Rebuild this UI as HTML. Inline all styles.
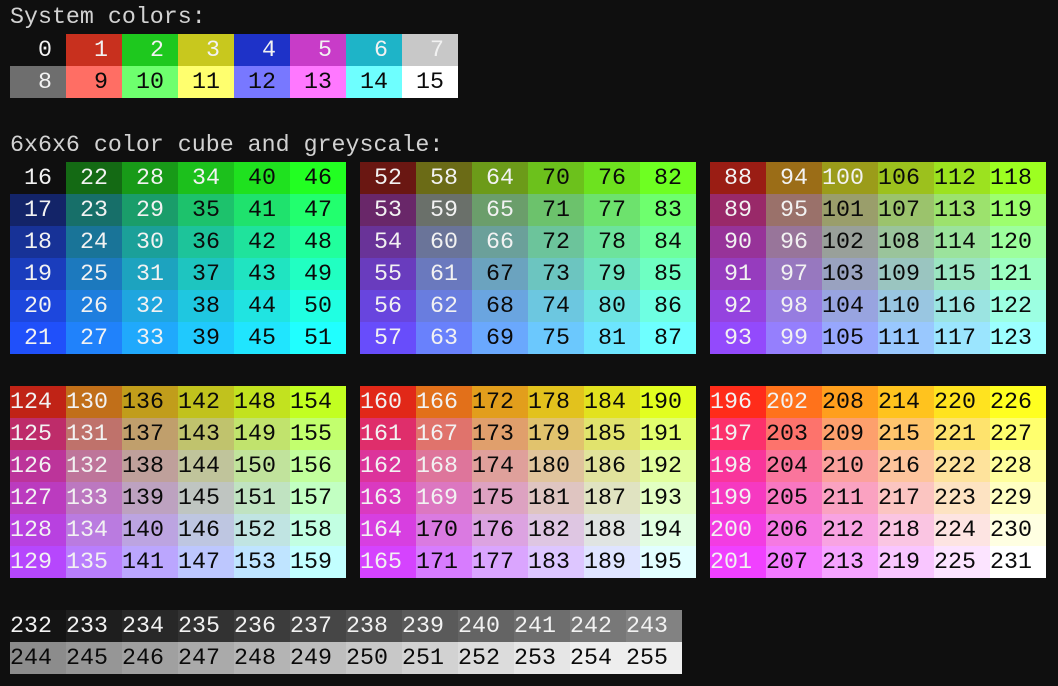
<!DOCTYPE html>
<html><head><meta charset="utf-8">
<style>
html,body{margin:0;padding:0;background:#0f0f0f;width:1058px;height:686px;overflow:hidden}
body{position:relative;font-family:"Liberation Mono",monospace;font-size:23.3px;line-height:32px}
.h{position:absolute;left:10px;color:#d2d2d2;white-space:pre}
.g{position:absolute;display:grid;grid-auto-rows:32px}
.g i{font-style:normal;display:block;text-align:right;padding-right:14px;box-sizing:border-box;width:56px;height:32px;line-height:32px}
.c6{grid-template-columns:repeat(6,56px)}
.c8{grid-template-columns:repeat(8,56px)}
.c12{grid-template-columns:repeat(12,56px)}
</style></head><body>
<div class="h" style="top:1px">System colors:</div>
<div class="g c8" style="left:10px;top:34px">
<i>0</i><i>1</i><i>2</i><i>3</i><i>4</i><i>5</i><i>6</i><i>7</i>
<i>8</i><i>9</i><i>10</i><i>11</i><i>12</i><i>13</i><i>14</i><i>15</i>
</div>
<div class="h" style="top:129px">6x6x6 color cube and greyscale:</div>
<div class="g c6" style="left:10px;top:162px">
<i>16</i><i>22</i><i>28</i><i>34</i><i>40</i><i>46</i>
<i>17</i><i>23</i><i>29</i><i>35</i><i>41</i><i>47</i>
<i>18</i><i>24</i><i>30</i><i>36</i><i>42</i><i>48</i>
<i>19</i><i>25</i><i>31</i><i>37</i><i>43</i><i>49</i>
<i>20</i><i>26</i><i>32</i><i>38</i><i>44</i><i>50</i>
<i>21</i><i>27</i><i>33</i><i>39</i><i>45</i><i>51</i>
</div>
<div class="g c6" style="left:360px;top:162px">
<i>52</i><i>58</i><i>64</i><i>70</i><i>76</i><i>82</i>
<i>53</i><i>59</i><i>65</i><i>71</i><i>77</i><i>83</i>
<i>54</i><i>60</i><i>66</i><i>72</i><i>78</i><i>84</i>
<i>55</i><i>61</i><i>67</i><i>73</i><i>79</i><i>85</i>
<i>56</i><i>62</i><i>68</i><i>74</i><i>80</i><i>86</i>
<i>57</i><i>63</i><i>69</i><i>75</i><i>81</i><i>87</i>
</div>
<div class="g c6" style="left:710px;top:162px">
<i>88</i><i>94</i><i>100</i><i>106</i><i>112</i><i>118</i>
<i>89</i><i>95</i><i>101</i><i>107</i><i>113</i><i>119</i>
<i>90</i><i>96</i><i>102</i><i>108</i><i>114</i><i>120</i>
<i>91</i><i>97</i><i>103</i><i>109</i><i>115</i><i>121</i>
<i>92</i><i>98</i><i>104</i><i>110</i><i>116</i><i>122</i>
<i>93</i><i>99</i><i>105</i><i>111</i><i>117</i><i>123</i>
</div>
<div class="g c6" style="left:10px;top:386px">
<i>124</i><i>130</i><i>136</i><i>142</i><i>148</i><i>154</i>
<i>125</i><i>131</i><i>137</i><i>143</i><i>149</i><i>155</i>
<i>126</i><i>132</i><i>138</i><i>144</i><i>150</i><i>156</i>
<i>127</i><i>133</i><i>139</i><i>145</i><i>151</i><i>157</i>
<i>128</i><i>134</i><i>140</i><i>146</i><i>152</i><i>158</i>
<i>129</i><i>135</i><i>141</i><i>147</i><i>153</i><i>159</i>
</div>
<div class="g c6" style="left:360px;top:386px">
<i>160</i><i>166</i><i>172</i><i>178</i><i>184</i><i>190</i>
<i>161</i><i>167</i><i>173</i><i>179</i><i>185</i><i>191</i>
<i>162</i><i>168</i><i>174</i><i>180</i><i>186</i><i>192</i>
<i>163</i><i>169</i><i>175</i><i>181</i><i>187</i><i>193</i>
<i>164</i><i>170</i><i>176</i><i>182</i><i>188</i><i>194</i>
<i>165</i><i>171</i><i>177</i><i>183</i><i>189</i><i>195</i>
</div>
<div class="g c6" style="left:710px;top:386px">
<i>196</i><i>202</i><i>208</i><i>214</i><i>220</i><i>226</i>
<i>197</i><i>203</i><i>209</i><i>215</i><i>221</i><i>227</i>
<i>198</i><i>204</i><i>210</i><i>216</i><i>222</i><i>228</i>
<i>199</i><i>205</i><i>211</i><i>217</i><i>223</i><i>229</i>
<i>200</i><i>206</i><i>212</i><i>218</i><i>224</i><i>230</i>
<i>201</i><i>207</i><i>213</i><i>219</i><i>225</i><i>231</i>
</div>
<div class="g c12" style="left:10px;top:610px">
<i>232</i><i>233</i><i>234</i><i>235</i><i>236</i><i>237</i><i>238</i><i>239</i><i>240</i><i>241</i><i>242</i><i>243</i>
<i>244</i><i>245</i><i>246</i><i>247</i><i>248</i><i>249</i><i>250</i><i>251</i><i>252</i><i>253</i><i>254</i><i>255</i>
</div>
<script>
var sys=["#0f0f0f","#c8301e","#1ec81e","#c8c81e","#1e32c8","#c83cc8","#1eb4c8","#c8c8c8","#6e6e6e","#ff6e64","#6eff6e","#ffff6e","#7878ff","#ff78ff","#6effff","#ffffff"];
var K={"000":[15,15,15],"100":[255,44,26],"010":[34,255,34],"001":[32,80,250],"110":[255,255,32],"101":[240,64,255],"011":[32,255,255],"111":[255,255,255]};
var P=1.8;
function cube(r,g,b){var fr=r/5,fg=g/5,fb=b/5,o=[0,0,0];
for(var a=0;a<2;a++)for(var c=0;c<2;c++)for(var d=0;d<2;d++){
var w=(a?fr:1-fr)*(c?fg:1-fg)*(d?fb:1-fb);var k=K[""+a+c+d];
for(var j=0;j<3;j++)o[j]+=w*Math.pow(k[j]/255,P);}
return "rgb("+o.map(function(v){return Math.round(255*Math.pow(v,1/P));}).join(",")+")";}
function white(r,g,b){
if(g==0)return true;
if(g==1){if(r==4&&b>=4)return false;if(r==5&&b>=1)return false;return true;}
if(g==2){return r==0||(r==1&&b<=2)||(r==2&&b==0);}
if(g==3)return r==0&&b==0;
return false;}
var els=document.querySelectorAll(".g i");
for(var i=0;i<els.length;i++){var e=els[i],n=parseInt(e.textContent,10),bg,fw;
if(n<16){bg=sys[n];fw=n<=8;}
else if(n<232){var m=n-16,r=Math.floor(m/36),g=Math.floor(m/6)%6,b=m%6;bg=cube(r,g,b);fw=white(r,g,b);}
else{var v=20+10*(n-232);if(v>238)v=238;bg="rgb("+v+","+v+","+v+")";fw=n<244;}
e.style.background=bg;e.style.color=fw?"#f2f2f2":"#0a0a0a";}
</script>
</body></html>
